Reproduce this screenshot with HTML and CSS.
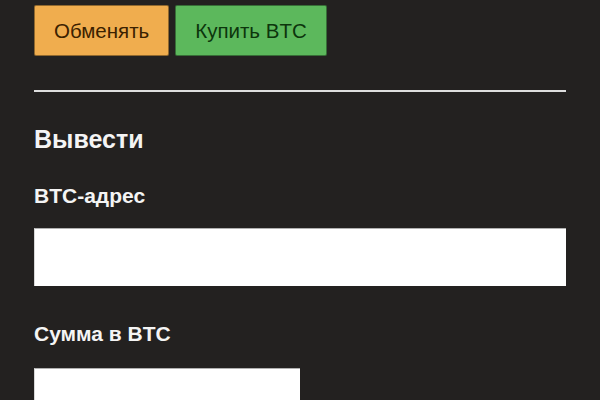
FILE: index.html
```html
<!DOCTYPE html>
<html lang="ru">
<head>
<meta charset="utf-8">
<link rel="stylesheet" href="styles.css">
</head>
<body>
<div class="page">
  <div class="actions">
    <button class="btn btn-exchange">Обменять</button>
    <button class="btn btn-buy">Купить BTC</button>
  </div>
  <hr class="divider">
  <h2 class="section-title">Вывести</h2>
  <label class="field-label" for="addr">BTC-адрес</label>
  <input class="field-input" id="addr" type="text">
  <label class="field-label field-label-next" for="amount">Сумма в BTC</label>
  <input class="field-input field-input-short" id="amount" type="text">
</div>
</body>
</html>
```
FILE: styles.css
```css
html, body {
  margin: 0;
  padding: 0;
  background: #232120;
  font-family: "Liberation Sans", Arial, Helvetica, sans-serif;
  color: #f4f4f4;
  overflow: hidden;
}
.page {
  padding: 5px 34px 0 34px;
  display: flex;
  flex-direction: column;
  align-items: flex-start;
}
.actions {
  display: flex;
  gap: 6px;
}
.btn {
  height: 51px;
  padding: 0 19px;
  font-family: inherit;
  font-size: 20.5px;
  border: 1px solid rgba(0, 0, 0, 0.4);
  border-radius: 2px;
}
.btn-exchange {
  background: #f0ad4e;
  color: #3b2100;
}
.btn-buy {
  background: #5cb85c;
  color: #0c350c;
}
.divider {
  align-self: stretch;
  margin: 34px 0 0 0;
  border: 0;
  border-top: 2px solid #dedede;
}
.section-title {
  margin: 32px 0 0 0;
  font-size: 25px;
  font-weight: bold;
  line-height: 30px;
}
.field-label {
  margin-top: 31px;
  font-size: 21px;
  font-weight: bold;
  line-height: 22px;
}
.field-input {
  align-self: stretch;
  margin-top: 21px;
  height: 58px;
  box-sizing: border-box;
  border: 0;
  border-top: 1px solid #b0b0b0;
  border-left: 1px solid #d8d8d8;
  background: #ffffff;
  padding: 0 10px;
}
.field-label-next {
  margin-top: 37px;
}
.field-input-short {
  align-self: flex-start;
  margin-top: 23px;
  width: 266px;
}
```
